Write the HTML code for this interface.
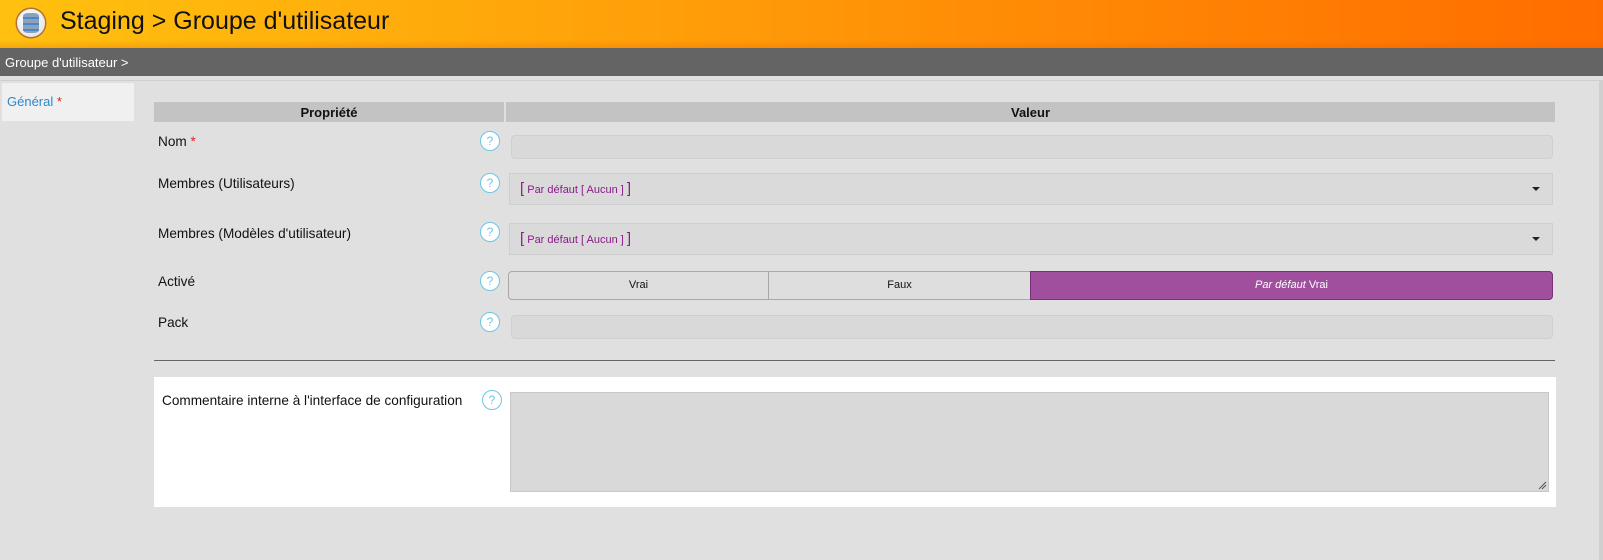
<!DOCTYPE html><html><head><style>
body{margin:0;width:1603px;height:560px;background:#e0e0e0;font-family:"Liberation Sans",sans-serif;position:relative;overflow:hidden}
.a{position:absolute}
.hdr{left:0;top:0;width:1603px;height:48px;background:linear-gradient(90deg,#ffc10f 0%,#ffa40a 35%,#ff8a05 65%,#ff6d00 100%)}
.hdr:after{content:"";position:absolute;left:0;right:0;bottom:0;height:8px;background:linear-gradient(rgba(220,90,0,0),rgba(220,90,0,.25))}
.lbl{font-size:13.6px;color:#111}
.q{width:18px;height:18px;border:1.5px solid #6cc6e4;border-radius:50%;background:#fff;color:#6cc6e4;font-size:12px;text-align:center;line-height:18px;box-sizing:content-box}
.inp{background:#d9d9d9;border:1px solid #cfcfcf;border-radius:4px;box-sizing:border-box}
.sel{background:#dadada;border:1px solid #cfcfcf;box-sizing:border-box;font-size:11px;color:#8b1a8b;padding-left:10px}
.caret{right:12px;top:13px;width:0;height:0;border-left:4px solid transparent;border-right:4px solid transparent;border-top:4px solid #222}
.btn{background:#dedede;border:1px solid #a8a8a8;box-sizing:border-box;font-size:11px;color:#111;text-align:center;line-height:27px}
</style></head><body>
<div class="a hdr"></div>
<div class="a" style="left:17px;top:9px;width:28px;height:28px;border-radius:50%;background:radial-gradient(circle at 40% 35%,#fff,#ddd);box-shadow:0 0 0 1.5px #b0703a"></div>
<div class="a" style="left:23px;top:13px;width:16px;height:20px;border-radius:5px/3px;background:repeating-linear-gradient(#8aa3bd 0 4px,#4e86c8 4px 6px)"></div>
<div class="a" style="left:60px;top:7px;font-size:25px;color:#111;white-space:nowrap">Staging &gt; Groupe d'utilisateur</div>
<div class="a" style="left:0;top:48px;width:1603px;height:28px;background:#646464"></div>
<div class="a" style="left:5px;top:55px;font-size:13px;color:#fff">Groupe d'utilisateur &gt;</div>
<div class="a" style="left:0;top:80px;width:1600px;height:1px;background:#cfcfcf"></div>
<div class="a" style="left:1599px;top:80px;width:4px;height:480px;background:#cfcfcf"></div>
<div class="a" style="left:2px;top:83px;width:132px;height:38px;background:#f0f0f0"></div>
<div class="a" style="left:7px;top:94px;font-size:13px;color:#2a8ad0">Général <span style="color:#e02020">*</span></div>
<div class="a" style="left:154px;top:102px;width:350px;height:20px;background:#c3c3c3;font-size:13px;font-weight:bold;text-align:center;line-height:21px;color:#111">Propriété</div>
<div class="a" style="left:506px;top:102px;width:1049px;height:20px;background:#c3c3c3;font-size:13px;font-weight:bold;text-align:center;line-height:21px;color:#111">Valeur</div>

<div class="a lbl" style="left:158px;top:134px">Nom <span style="color:#e02020">*</span></div>
<div class="a q" style="left:480px;top:131px">?</div>
<div class="a inp" style="left:511px;top:135px;width:1042px;height:24px"></div>

<div class="a lbl" style="left:158px;top:176px">Membres (Utilisateurs)</div>
<div class="a q" style="left:480px;top:173px">?</div>
<div class="a sel" style="left:509px;top:173px;width:1044px;height:32px;line-height:30px"><span style="font-size:15px">[</span> Par défaut [ Aucun ] <span style="font-size:15px">]</span><div class="a caret"></div></div>

<div class="a lbl" style="left:158px;top:226px">Membres (Modèles d'utilisateur)</div>
<div class="a q" style="left:480px;top:222px">?</div>
<div class="a sel" style="left:509px;top:223px;width:1044px;height:32px;line-height:30px"><span style="font-size:15px">[</span> Par défaut [ Aucun ] <span style="font-size:15px">]</span><div class="a caret"></div></div>

<div class="a lbl" style="left:158px;top:274px">Activé</div>
<div class="a q" style="left:480px;top:271px">?</div>
<div class="a btn" style="left:508px;top:271px;width:261px;height:29px;border-radius:4px 0 0 4px">Vrai</div>
<div class="a btn" style="left:768px;top:271px;width:263px;height:29px">Faux</div>
<div class="a btn" style="left:1030px;top:271px;width:523px;height:29px;background:#a04f9f;border-color:#7a2f7a;color:#fff;border-radius:0 4px 4px 0"><i>Par défaut</i> Vrai</div>

<div class="a lbl" style="left:158px;top:315px">Pack</div>
<div class="a q" style="left:480px;top:312px">?</div>
<div class="a inp" style="left:511px;top:315px;width:1042px;height:24px"></div>

<div class="a" style="left:154px;top:360px;width:1401px;height:1px;background:#666"></div>
<div class="a" style="left:154px;top:377px;width:1402px;height:130px;background:#fff"></div>
<div class="a lbl" style="left:162px;top:393px">Commentaire interne à l'interface de configuration</div>
<div class="a q" style="left:482px;top:390px">?</div>
<div class="a" style="left:510px;top:392px;width:1039px;height:100px;background:#d9d9d9;border:1px solid #c8c8c8;box-sizing:border-box"></div>
<svg class="a" style="left:1538px;top:481px" width="9" height="9"><path d="M1 8L8 1M4 8L8 4" stroke="#555" stroke-width="1"/></svg>
</body></html>
